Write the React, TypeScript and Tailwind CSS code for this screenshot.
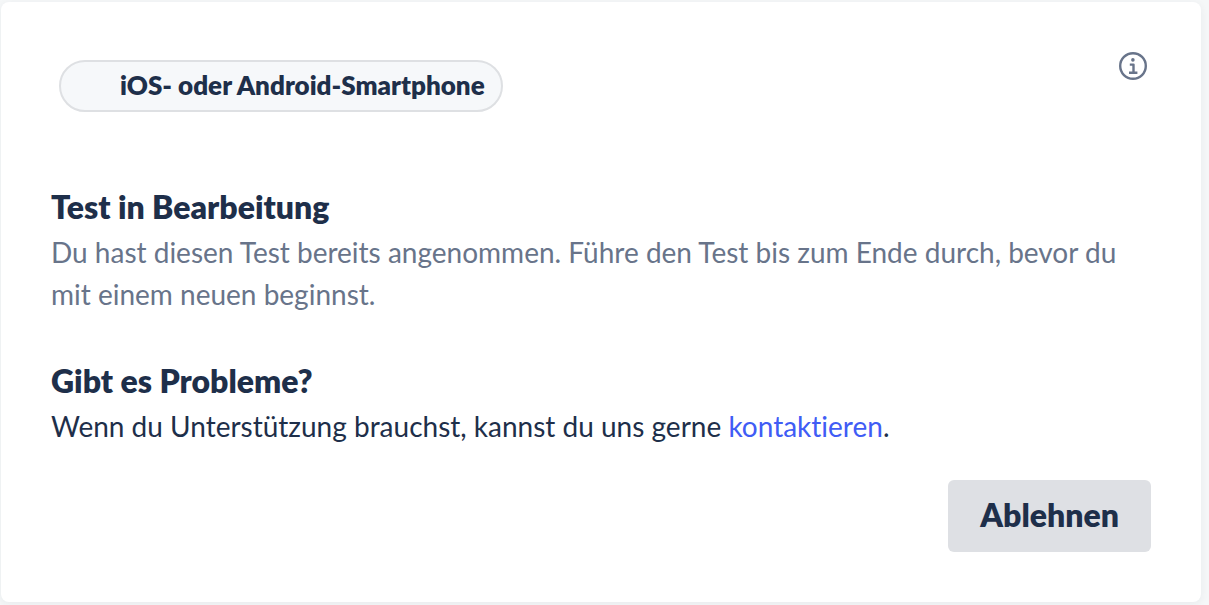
export default function App() {
  return (
    <main className="flex min-h-screen flex-col bg-[#f5f7f8] pt-0.5 pr-2 pb-[3px] pl-px font-['Lato',sans-serif] text-[#1e2f4a] [font-variant-ligatures:none]">
      <section className="flex grow flex-col rounded-lg bg-white p-[50px] shadow-[0_2px_8px_rgba(30,50,70,0.06)]">
        <header className="flex items-start justify-between">
          <span className="mt-2 ml-2 flex h-[52px] items-center rounded-full border-2 border-[#dee0e3] bg-[#f6f8fa] pr-4 pb-0.5 pl-[59px] text-[26px] font-extrabold">
            iOS- oder Android-Smartphone
          </span>
          <button type="button" aria-label="Info" className="mr-1 text-[#68748a]">
            <svg width="28" height="28" viewBox="0 0 28 28" fill="none" stroke="currentColor" strokeWidth="2.4" aria-hidden="true">
              <circle cx="14" cy="14" r="12.8" />
              <path d="M10.8 12.6H14.5V20.5M10 20.7H18.4" strokeLinejoin="round" />
              <circle cx="13.9" cy="7.9" r="1.8" fill="currentColor" stroke="none" />
            </svg>
          </button>
        </header>
        <h2 className="mt-[74px] text-[32px] leading-[42px] font-extrabold">Test in Bearbeitung</h2>
        <p className="mt-[3px] text-[28px] leading-[42px] text-[#68748a]">
          Du hast diesen Test bereits angenommen. Führe den Test bis zum Ende durch, bevor du mit einem neuen beginnst.
        </p>
        <h2 className="mt-[45px] text-[32px] leading-[42px] font-extrabold">Gibt es Probleme?</h2>
        <p className="mt-[3px] text-[28px] leading-[42px]">
          Wenn du Unterstützung brauchst, kannst du uns gerne <a href="#kontakt" className="text-[#405cf5]">kontaktieren</a>.
        </p>
        <button type="button" className="mt-[33px] h-[72px] self-end rounded-md bg-[#dee0e4] px-8 pb-0.5 text-[32px] font-extrabold">Ablehnen</button>
      </section>
    </main>
  );
}
